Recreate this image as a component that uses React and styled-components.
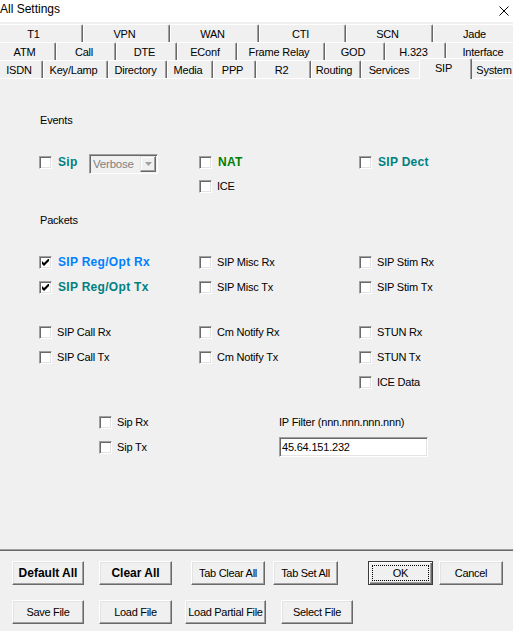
import React from "react";
import styled, { createGlobalStyle } from "styled-components";

const GlobalStyle = createGlobalStyle`
  html, body {
    margin: 0;
    height: 100%;
    overflow: hidden;
    background: #f0f0f0;
  }
  #root {
    height: 100%;
  }
`;

const Window = styled.div`
  width: 513px;
  height: 631px;
  overflow: hidden;
  display: flex;
  flex-direction: column;
  background: #f0f0f0;
  color: #000;
  font-family: "Liberation Sans", Arial, sans-serif;
  font-size: 11px;
  letter-spacing: -0.2px;
`;

const TitleBar = styled.div`
  flex: none;
  height: 22px;
  background: #fff;
  display: flex;
  justify-content: space-between;
  align-items: flex-start;
`;

const Title = styled.span`
  font-size: 12px;
  line-height: 15px;
  letter-spacing: 0;
  margin: 2px 0 0 0;
`;

const CloseIcon = styled.svg`
  margin: 6px 4px 0 0;
`;

// three staggered rows of tabs
const TabStrip = styled.div`
  flex: none;
  padding-top: 2px;
  display: flex;
  flex-direction: column;
`;

const TabRow = styled.div`
  display: flex;
  height: 18px;
  margin-left: ${(p) => p.$offset}px;
`;

const Tab = styled.div`
  flex: none;
  box-sizing: border-box;
  width: ${(p) => p.$w}px;
  height: ${(p) => (p.$selected ? 21 : 18)}px;
  margin: ${(p) => (p.$selected ? "-2px -2px 0" : "0")};
  position: relative;
  z-index: ${(p) => (p.$selected ? 2 : 1)};
  background: #f0f0f0;
  border-top: 1px solid #fff;
  border-left: 1px solid #fff;
  border-right: 1px solid #696969;
  border-radius: 2px 2px 0 0;
  box-shadow: inset -1px 0 #a0a0a0;
  display: flex;
  align-items: center;
  justify-content: center;
  padding: 0 4px ${(p) => (p.$selected ? 3 : 0)}px 0;
  white-space: nowrap;
`;

const Panel = styled.div`
  flex: none;
  box-sizing: border-box;
  height: 473px;
  border-top: 1px solid #fff;
  border-bottom: 1px solid #696969;
  box-shadow: inset 0 -1px #a0a0a0;
  padding-left: 39px;
  display: flex;
  flex-direction: column;
`;

const SectionLabel = styled.div`
  line-height: 13px;
  margin: ${(p) => p.$mt}px 0 0 1px;
`;

const Grid = styled.div`
  display: grid;
  grid-template-columns: 160px 160px 1fr;
  height: 13px;
  align-items: start;
  margin-top: ${(p) => p.$mt}px;
`;

const FilterGrid = styled.div`
  display: grid;
  grid-template-columns: 180px 1fr;
  height: 13px;
  align-items: start;
  margin: ${(p) => p.$mt}px 0 0 60px;
`;

const Cell = styled.div`
  display: flex;
  align-items: flex-start;
`;

const CheckItem = styled.div`
  display: flex;
  align-items: center;
  height: 13px;
  width: ${(p) => (p.$w ? `${p.$w}px` : "auto")};
  flex: none;
`;

const Box = styled.span`
  width: 13px;
  height: 13px;
  box-sizing: border-box;
  flex: none;
  background: #fff;
  border: 1px solid;
  border-color: #a0a0a0 #fff #fff #a0a0a0;
  box-shadow: inset 1px 1px #696969, inset -1px -1px #e3e3e3;
  display: flex;
  align-items: center;
  justify-content: center;
`;

const Label = styled.span`
  margin-left: ${(p) => (p.$bold ? 6 : 5)}px;
  line-height: 13px;
  white-space: nowrap;
  color: ${(p) => p.$color || "#000"};
  font-weight: ${(p) => (p.$bold ? 700 : 400)};
  font-size: ${(p) => (p.$bold ? 12 : 11)}px;
  letter-spacing: ${(p) => (p.$bold ? 0.3 : -0.2)}px;
`;

const FieldCaption = styled.div`
  line-height: 13px;
  white-space: nowrap;
`;

const Select = styled.div`
  box-sizing: border-box;
  width: 69px;
  height: 20px;
  margin-top: -2px;
  border: 1px solid;
  border-color: #a0a0a0 #fff #fff #a0a0a0;
  box-shadow: inset 1px 1px #696969;
  background: #f0f0f0;
  display: flex;
  align-items: center;
  justify-content: space-between;
  padding: 1px 1px 1px 3px;
  color: #808080;
  font-size: 11.5px;
`;

const ArrowButton = styled.span`
  box-sizing: border-box;
  width: 16px;
  height: 16px;
  background: #f0f0f0;
  border: 1px solid;
  border-color: #e3e3e3 #696969 #696969 #e3e3e3;
  box-shadow: inset -1px -1px #a0a0a0, inset 1px 1px #fff;
  display: flex;
  align-items: center;
  justify-content: center;
`;

const TextInput = styled.div`
  box-sizing: border-box;
  width: 149px;
  height: 20px;
  margin-top: -4px;
  border: 1px solid;
  border-color: #a0a0a0 #fff #fff #a0a0a0;
  box-shadow: inset 1px 1px #696969, inset -1px -1px #e3e3e3;
  background: #fff;
  padding: 0 0 0 2px;
  line-height: 18px;
`;

const Footer = styled.div`
  flex: 1;
  padding: 10px 0 0 12px;
  display: flex;
  flex-direction: column;
  gap: 15px;
`;

const ButtonRow = styled.div`
  display: flex;
`;

const Button = styled.div`
  position: relative;
  box-sizing: border-box;
  flex: none;
  width: ${(p) => p.$w}px;
  height: 24px;
  margin-left: ${(p) => p.$ml || 0}px;
  background: #f0f0f0;
  border: 1px solid;
  border-color: ${(p) => (p.$default ? "#3c3c3c" : "#fff #696969 #696969 #fff")};
  box-shadow: ${(p) =>
    p.$default
      ? "inset 1px 1px #fff, inset -1px -1px #696969, inset -2px -2px #a0a0a0"
      : "inset -1px -1px #a0a0a0, inset 1px 1px #e3e3e3"};
  display: flex;
  align-items: center;
  justify-content: center;
  padding-bottom: 1px;
  font-weight: ${(p) => (p.$bold ? 700 : 400)};
  font-size: ${(p) => (p.$bold ? 12 : 11)}px;
  letter-spacing: ${(p) => (p.$bold ? 0 : -0.3)}px;
  white-space: nowrap;

  &::after {
    content: "";
    display: ${(p) => (p.$default ? "block" : "none")};
    position: absolute;
    inset: 3px;
    border: 1px dotted #000;
  }
`;

const tabRows = [
  {
    offset: -12,
    tabs: [["T1", 95], ["VPN", 87], ["WAN", 89], ["CTI", 87], ["SCN", 87], ["Jade", 87]],
  },
  {
    offset: -3,
    tabs: [
      ["ATM", 59], ["Call", 60], ["DTE", 61], ["EConf", 60],
      ["Frame Relay", 88], ["GOD", 60], ["H.323", 61], ["Interface", 78],
    ],
  },
  {
    offset: -1,
    tabs: [
      ["ISDN", 44], ["Key/Lamp", 65], ["Directory", 59], ["Media", 46], ["PPP", 43],
      ["R2", 55], ["Routing", 50], ["Services", 60], ["SIP", 53, true], ["System", 52],
    ],
  },
];

function Check({ checked }) {
  return (
    <Box>
      {checked && (
        <svg width="7" height="7" viewBox="0 0 7 7">
          <path d="M0 2 L2 4 L7 -1 L7 2 L2 7 L0 5 Z" fill="#000" />
        </svg>
      )}
    </Box>
  );
}

function CheckBox({ label, checked, bold, color, w }) {
  return (
    <CheckItem $w={w}>
      <Check checked={checked} />
      <Label $bold={bold} $color={color}>{label}</Label>
    </CheckItem>
  );
}

const TEAL = "#008080";

export default function App() {
  return (
    <>
      <GlobalStyle />
      <Window>
        <TitleBar>
          <Title>All Settings</Title>
          <CloseIcon width="10" height="10" viewBox="0 0 10 10">
            <path d="M0.5 0.5 L9.5 9.5 M9.5 0.5 L0.5 9.5" stroke="#000" strokeWidth="1" />
          </CloseIcon>
        </TitleBar>

        <TabStrip>
          {tabRows.map((row, i) => (
            <TabRow key={i} $offset={row.offset}>
              {row.tabs.map(([name, w, selected]) => (
                <Tab key={name} $w={w} $selected={selected}>
                  {name}
                </Tab>
              ))}
            </TabRow>
          ))}
        </TabStrip>

        <Panel>
          <SectionLabel $mt={35}>Events</SectionLabel>
          <Grid $mt={29}>
            <Cell>
              <CheckBox label="Sip" bold color={TEAL} w={50} />
              <Select>
                Verbose
                <ArrowButton>
                  <svg width="7" height="4" viewBox="0 0 7 4">
                    <path d="M0 0 H7 L3.5 4 Z" fill="#a0a0a0" />
                  </svg>
                </ArrowButton>
              </Select>
            </Cell>
            <CheckBox label="NAT" bold color="#008000" />
            <CheckBox label="SIP Dect" bold color={TEAL} />
          </Grid>
          <Grid $mt={11}>
            <span />
            <CheckBox label="ICE" />
          </Grid>

          <SectionLabel $mt={21}>Packets</SectionLabel>
          <Grid $mt={29}>
            <CheckBox label="SIP Reg/Opt Rx" checked bold color="#0080ff" />
            <CheckBox label="SIP Misc Rx" />
            <CheckBox label="SIP Stim Rx" />
          </Grid>
          <Grid $mt={12}>
            <CheckBox label="SIP Reg/Opt Tx" checked bold color={TEAL} />
            <CheckBox label="SIP Misc Tx" />
            <CheckBox label="SIP Stim Tx" />
          </Grid>

          <Grid $mt={32}>
            <CheckBox label="SIP Call Rx" />
            <CheckBox label="Cm Notify Rx" />
            <CheckBox label="STUN Rx" />
          </Grid>
          <Grid $mt={12}>
            <CheckBox label="SIP Call Tx" />
            <CheckBox label="Cm Notify Tx" />
            <CheckBox label="STUN Tx" />
          </Grid>
          <Grid $mt={12}>
            <span />
            <span />
            <CheckBox label="ICE Data" />
          </Grid>

          <FilterGrid $mt={27}>
            <CheckBox label="Sip Rx" />
            <FieldCaption>IP Filter (nnn.nnn.nnn.nnn)</FieldCaption>
          </FilterGrid>
          <FilterGrid $mt={12}>
            <CheckBox label="Sip Tx" />
            <TextInput>45.64.151.232</TextInput>
          </FilterGrid>
        </Panel>

        <Footer>
          <ButtonRow>
            <Button $w={72} $bold>Default All</Button>
            <Button $w={73} $ml={15} $bold>Clear All</Button>
            <Button $w={74} $ml={19}>Tab Clear All</Button>
            <Button $w={65} $ml={8}>Tab Set All</Button>
            <Button $w={65} $ml={30} $default>OK</Button>
            <Button $w={64} $ml={6}>Cancel</Button>
          </ButtonRow>
          <ButtonRow>
            <Button $w={72}>Save File</Button>
            <Button $w={73} $ml={15}>Load File</Button>
            <Button $w={81} $ml={13}>Load Partial File</Button>
            <Button $w={72} $ml={15}>Select File</Button>
          </ButtonRow>
        </Footer>
      </Window>
    </>
  );
}
